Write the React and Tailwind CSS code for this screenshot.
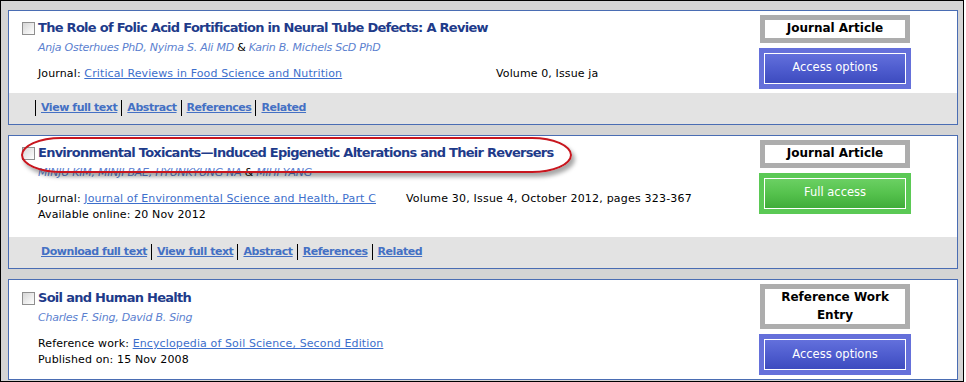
import React from "react";

const font = { fontFamily: '"DejaVu Sans", Verdana, sans-serif' };

function Checkbox() {
  return (
    <span className="mt-[2px] block h-[13px] w-[13px] shrink-0 border border-[#8f8f8f] bg-gradient-to-br from-[#d6d6d6] to-[#ffffff]" />
  );
}

function TypeBox({ lines }) {
  return (
    <div className="mx-[1px] w-[150px] border-[5px] border-[#adadad] bg-white text-center text-[12px] font-bold leading-[17.5px] text-black">
      {lines.map((l) => (
        <div key={l}>{l}</div>
      ))}
    </div>
  );
}

function AccessButton() {
  return (
    <div className="h-[41px] w-[152px] bg-[#6570da] p-[5px]">
      <div className="flex h-full w-full items-center justify-center border border-white bg-gradient-to-b from-[#6370dc] via-[#4f5dcf] to-[#3d4bbf] text-[11.5px] text-white">
        Access options
      </div>
    </div>
  );
}

function FullButton() {
  return (
    <div className="h-[41px] w-[152px] bg-[#5bc955] p-[5px]">
      <div className="flex h-full w-full items-center justify-center border border-white bg-gradient-to-b from-[#6bd063] via-[#55c24d] to-[#3fac39] text-[11.5px] text-white">
        Full access
      </div>
    </div>
  );
}

function FooterLinks({ links, firstSep }) {
  return (
    <div className="flex h-[31px] items-start bg-[#e3e3e3] pl-[26px] pt-[7px]">
      {links.map((l, i) => (
        <span
          key={l}
          className={
            "flex h-[16px] items-center border-l pl-[5px] pr-[4px] " +
            (i === 0 && !firstSep ? "border-transparent" : "border-black")
          }
        >
          <a className="text-[11px] font-bold leading-[16px] tracking-[-0.45px] text-[#4470c4] underline">{l}</a>
        </span>
      ))}
    </div>
  );
}

export default function App() {
  return (
    <div
      className="h-[382px] w-[964px] overflow-hidden border border-black bg-[#d4d4d4] pl-[7px] pt-[9px]"
      style={font}
    >
      <div className="flex w-[950px] flex-col gap-[10px]">
        {/* Card 1 */}
        <div className="border border-[#4a6db3] bg-white">
          <div className="flex">
            <div className="h-[82px] flex-1 pt-[9px]">
              <div className="flex gap-[3px] pl-[13px]">
                <Checkbox />
                <h2 className="text-[13px] font-bold leading-[16px] tracking-[-0.72px] text-[#1e3b8a]">
                  The Role of Folic Acid Fortification in Neural Tube Defects: A Review
                </h2>
              </div>
              <div className="mt-[4px] pl-[29px] text-[11px] italic leading-[16px] tracking-[-0.25px] text-[#5b7fcf]">
                <a>Anja Osterhues PhD</a>, <a>Nyima S. Ali MD</a>{" "}
                <span className="text-black not-italic">&amp;</span> <a>Karin B. Michels ScD PhD</a>
              </div>
              <div className="mt-[10px] flex pl-[29px] text-[11px] leading-[16px] tracking-[0.12px] text-black">
                <div className="w-[458px]">
                  Journal: <a className="text-[#3d6fcc] underline">Critical Reviews in Food Science and Nutrition</a>
                </div>
                <div>Volume 0, Issue ja</div>
              </div>
            </div>
            <div className="mr-[46px] flex w-[152px] flex-col gap-[5px] pt-[4px]">
              <TypeBox lines={["Journal Article"]} />
              <AccessButton />
            </div>
          </div>
          <FooterLinks links={["View full text", "Abstract", "References", "Related"]} firstSep />
        </div>

        {/* Card 2 */}
        <div className="relative border border-[#4a6db3] bg-white">
          <div className="flex">
            <div className="h-[101px] flex-1 pt-[9px]">
              <div className="flex gap-[3px] pl-[13px]">
                <Checkbox />
                <h2 className="text-[13px] font-bold leading-[16px] tracking-[-0.75px] text-[#1e3b8a]">
                  Environmental Toxicants—Induced Epigenetic Alterations and Their Reversers
                </h2>
              </div>
              <div className="mt-[4px] pl-[29px] text-[11px] italic leading-[16px] tracking-[-0.25px] text-[#5b7fcf]">
                <a>MINJU KIM</a>, <a>MINJI BAE</a>, <a>HYUNKYUNG NA</a>{" "}
                <span className="text-black not-italic">&amp;</span> <a>MIHI YANG</a>
              </div>
              <div className="mt-[10px] flex pl-[29px] text-[11px] leading-[16px] tracking-[0.12px] text-black">
                <div className="w-[368px]">
                  Journal:{" "}
                  <a className="text-[#3d6fcc] underline">Journal of Environmental Science and Health, Part C</a>
                </div>
                <div className="tracking-[0.2px]">Volume 30, Issue 4, October 2012, pages 323-367</div>
              </div>
              <div className="pl-[29px] text-[11px] leading-[16px] tracking-[0.12px] text-black">
                Available online: 20 Nov 2012
              </div>
            </div>
            <div className="mr-[46px] flex w-[152px] flex-col gap-[5px] pt-[4px]">
              <TypeBox lines={["Journal Article"]} />
              <FullButton />
            </div>
          </div>
          <FooterLinks
            links={["Download full text", "View full text", "Abstract", "References", "Related"]}
            firstSep={false}
          />
          <div className="pointer-events-none absolute left-[12px] top-[1px] h-[36px] w-[551px] rounded-[40px/18px] border-2 border-[#c8161e] shadow-[3px_4px_4px_rgba(0,0,0,0.35)]" />
        </div>

        {/* Card 3 */}
        <div className="border border-[#4a6db3] bg-white">
          <div className="flex">
            <div className="flex-1 pb-[11px] pt-[10px]">
              <div className="flex gap-[3px] pl-[13px]">
                <Checkbox />
                <h2 className="text-[13px] font-bold leading-[16px] tracking-[-0.72px] text-[#1e3b8a]">
                  Soil and Human Health
                </h2>
              </div>
              <div className="mt-[4px] pl-[29px] text-[11px] italic leading-[16px] tracking-[-0.25px] text-[#5b7fcf]">
                <a>Charles F. Sing</a>, <a>David B. Sing</a>
              </div>
              <div className="mt-[10px] pl-[29px] text-[11px] leading-[16px] tracking-[0.12px] text-black">
                Reference work:{" "}
                <a className="text-[#3d6fcc] underline">Encyclopedia of Soil Science, Second Edition</a>
              </div>
              <div className="pl-[29px] text-[11px] leading-[16px] tracking-[0.12px] text-black">
                Published on: 15 Nov 2008
              </div>
            </div>
            <div className="mr-[46px] flex w-[152px] flex-col gap-[5px] pt-[4px]">
              <TypeBox lines={["Reference Work", "Entry"]} />
              <AccessButton />
            </div>
          </div>
        </div>
      </div>
    </div>
  );
}
